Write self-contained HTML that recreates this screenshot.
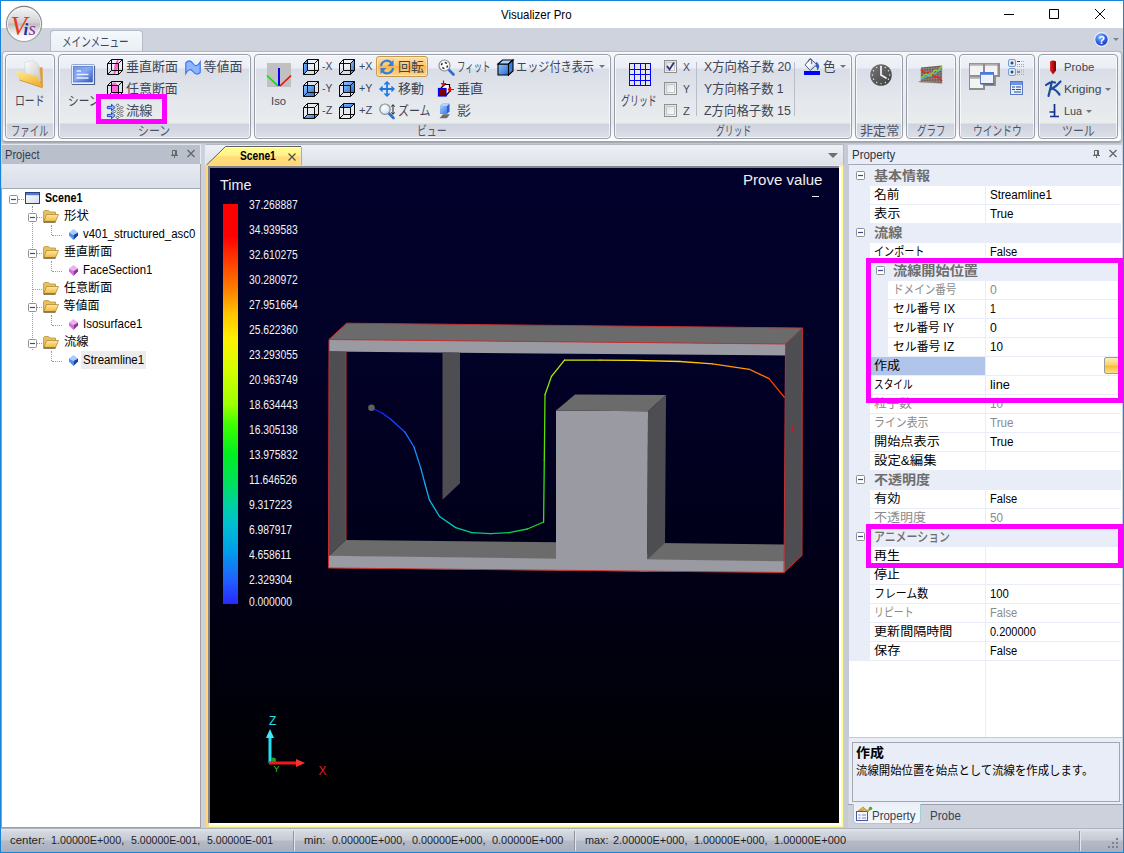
<!DOCTYPE html>
<html lang="ja"><head><meta charset="utf-8"><title>Visualizer Pro</title>
<style>
html,body{margin:0;padding:0}
body{width:1124px;height:853px;overflow:hidden;position:relative;background:#ccd1dc;font-family:"Liberation Sans","Noto Sans CJK JP",sans-serif;font-size:12px;color:#1e1e1e;line-height:1}
div,span,svg{position:absolute;box-sizing:border-box;white-space:nowrap}
svg{overflow:visible}
#frame{left:0;top:0;width:1124px;height:853px;border:1px solid #1883d7;z-index:50;pointer-events:none}
#title{left:1px;top:1px;width:1122px;height:27px;background:#fff}
#tabstrip{left:1px;top:28px;width:1122px;height:24px;background:#ced3de}
#rtab{left:49px;top:1.5px;width:93px;height:23px;background:linear-gradient(#f3f8fb,#e9eef5);border:1px solid #b6bcc8;border-bottom:none;border-radius:4px 4px 0 0}
#ribbon{left:2px;top:51px;width:1120px;height:91px;background:linear-gradient(#f6f8fb,#eceff4 20%,#e8ebf1 80%,#fafbfd 94%,#fff);border:1px solid #b4b9c4;border-bottom-color:#9ca1ad;border-radius:4px;box-shadow:0 1px 2px rgba(90,96,110,.45)}
.grp{top:54px;height:85px;border:1px solid #989da8;border-radius:4px;background:linear-gradient(#f1f3f9 0,#ebeef5 13px,#d9dde7 14px,#e4e7ec 45px,#eaeded 68px,#cfd3de 69px,#dde0e8 84px);box-shadow:inset 0 0 0 1px rgba(255,255,255,.7)}
.tx{transform-origin:0 50%;color:#3d4556}
.c{transform-origin:50% 50%;text-align:center}
.sep{width:1px;background:#b9bec9}
.arr{width:0;height:0;border-left:3px solid transparent;border-right:3px solid transparent;border-top:3px solid #6e7686}
</style></head><body>
<div id="title"></div>
<span class="tx" style="left:500.7px;top:7.6px;font-size:12.4px;height:14.4px;line-height:14.4px;color:#000;transform:scaleX(0.926);">Visualizer Pro</span>
<svg style="left:1000px;top:5px" width="110" height="20" viewBox="0 0 110 20"><path d="M4 9.5h10M49.5 4.5h9v9h-9zM95 4l10 10M105 4l-10 10" stroke="#000" stroke-width="1" fill="none"/></svg>
<div id="tabstrip"><div id="rtab"></div></div>
<span class="tx" style="left:61.8px;top:34.0px;font-size:13px;height:15px;line-height:15px;transform:scaleX(0.736);">メインメニュー</span>
<div id="ribbon"></div>
<div class="grp" style="left:5px;width:50px"></div>
<span class="tx" style="left:11.3px;top:123.0px;font-size:13px;height:15px;line-height:15px;color:#4c5567;transform:scaleX(0.721);">ファイル</span>
<div class="grp" style="left:58px;width:193px"></div>
<span class="tx" style="left:137.5px;top:123.0px;font-size:13px;height:15px;line-height:15px;color:#4c5567;transform:scaleX(0.838);">シーン</span>
<div class="grp" style="left:254px;width:357px"></div>
<span class="tx" style="left:417.4px;top:123.0px;font-size:13px;height:15px;line-height:15px;color:#4c5567;transform:scaleX(0.759);">ビュー</span>
<div class="grp" style="left:614px;width:238px"></div>
<span class="tx" style="left:716.0px;top:123.0px;font-size:13px;height:15px;line-height:15px;color:#4c5567;transform:scaleX(0.679);">グリッド</span>
<div class="grp" style="left:855px;width:48px"></div>
<span class="tx" style="left:859.5px;top:123.0px;font-size:13px;height:15px;line-height:15px;color:#4c5567;transform:scaleX(1.008);">非定常</span>
<div class="grp" style="left:906px;width:50px"></div>
<span class="tx" style="left:916.5px;top:123.0px;font-size:13px;height:15px;line-height:15px;color:#4c5567;transform:scaleX(0.728);">グラフ</span>
<div class="grp" style="left:959px;width:76px"></div>
<span class="tx" style="left:972.5px;top:123.0px;font-size:13px;height:15px;line-height:15px;color:#4c5567;transform:scaleX(0.748);">ウインドウ</span>
<div class="grp" style="left:1038px;width:80px"></div>
<span class="tx" style="left:1061.5px;top:123.0px;font-size:13px;height:15px;line-height:15px;color:#4c5567;transform:scaleX(0.841);">ツール</span>
<svg style="left:4.5px;top:5.2px;" width="38" height="38" viewBox="0 0 38 38"><defs><linearGradient id="lg" x1="0" y1="0" x2="0" y2="1"><stop offset="0" stop-color="#f4f4f4"/><stop offset=".2" stop-color="#e6e6e6"/><stop offset=".47" stop-color="#cfcfcf"/><stop offset=".5" stop-color="#bdbdbd"/><stop offset=".62" stop-color="#d4d4d4"/><stop offset=".85" stop-color="#f6f6f6"/><stop offset="1" stop-color="#ffffff"/></linearGradient><linearGradient id="lgr" x1="0" y1="0" x2="0" y2="1"><stop offset="0" stop-color="#7e7e7e"/><stop offset="1" stop-color="#a8a8a8"/></linearGradient></defs><circle cx="19" cy="19" r="18.200" fill="url(#lgr)"/><circle cx="19" cy="19" r="17" fill="#f8f8f8"/><circle cx="19" cy="19" r="16.200" fill="url(#lg)"/><text x="5.500" y="30" font-family="Liberation Serif,serif" font-style="italic" font-size="27" fill="#ea3a1a">V</text><text x="18.500" y="30" font-family="Liberation Serif,serif" font-style="italic" font-weight="bold" font-size="17" fill="#1a2f9e">i</text><text x="23.500" y="30" font-family="Liberation Serif,serif" font-style="italic" font-size="19" fill="#8f2fa0">s</text></svg>
<svg width="0" height="0" style="left:0;top:0"><defs><linearGradient id="bg1" x1="0" y1="0" x2="1" y2="1"><stop offset="0" stop-color="#8ec4ff"/><stop offset="1" stop-color="#2a6cd0"/></linearGradient></defs></svg>
<svg style="left:14px;top:60px;" width="32" height="30" viewBox="0 0 32 30"><defs><linearGradient id="fo1" x1="0" y1="0" x2=".6" y2="1"><stop offset="0" stop-color="#fdea98"/><stop offset=".5" stop-color="#f9d162"/><stop offset="1" stop-color="#eeb03c"/></linearGradient><linearGradient id="fo2" x1="0" y1="0" x2="1" y2="1"><stop offset="0" stop-color="#ffffff"/><stop offset="1" stop-color="#c4c4c4"/></linearGradient></defs><path d="M22.500 8.500l6-1.500.5 20-2 .8z" fill="#dc9d3a"/><path d="M10.500 2.500l9-2.200 5.500 4.700 1.500 16-14 1.500z" fill="url(#fo2)" stroke="#cdcdcd" stroke-width=".5"/><path d="M19.500 .5l.8 4.500 4.500 0z" fill="#e4e4e4"/><path d="M1.500 10.500L23 16.200 28.500 27.800 5.500 20z" fill="url(#fo1)"/><path d="M5.500 20l23 7.800" stroke="#c88a28" stroke-width=".8"/></svg>
<span class="tx" style="left:15.1px;top:93.0px;font-size:13px;height:15px;line-height:15px;transform:scaleX(0.759);">ロード</span>
<svg style="left:71px;top:64px;" width="24" height="21" viewBox="0 0 24 21"><defs><linearGradient id="sc1" x1="0" y1="0" x2="1" y2="1"><stop offset="0" stop-color="#6d94ee"/><stop offset=".45" stop-color="#88aaf6"/><stop offset="1" stop-color="#2f58c4"/></linearGradient></defs><rect x=".5" y=".5" width="23" height="20" rx="1" fill="#e8eefa" stroke="#97aace"/><rect x="2.500" y="2.500" width="19" height="15.500" fill="url(#sc1)" stroke="#3f62c0" stroke-width=".6"/><path d="M5.500 7h4.500M5.500 10.500h12M5.500 14h12" stroke="#e6efff" stroke-width="1.500"/><path d="M1 20.500h22.500V2" stroke="#4d6290" fill="none" stroke-width="1.200"/></svg>
<span class="tx" style="left:67.5px;top:93.0px;font-size:13px;height:15px;line-height:15px;transform:scaleX(0.821);">シーン</span>
<svg style="left:107px;top:59px;" width="16" height="16" viewBox="0 0 16 16"><path d="M6.5 15l1-9 3-5.5 1 1-.8 8.5-3 5z" fill="#ff5ad2"/><path d="M.5 4.5h11v11H.5zM4.5 .5h11v11H4.5zM.5 4.5l4-4M11.5 4.5l4-4M.5 15.5l4-4M11.5 15.5l4-4" fill="none" stroke="#0a0a0a" stroke-width="1"/></svg>
<span class="tx" style="left:125.9px;top:59.0px;font-size:13px;height:15px;line-height:15px;transform:scaleX(1.0);">垂直断面</span>
<svg style="left:185px;top:59px;" width="16" height="16" viewBox="0 0 16 16"><path d="M.8 14.500V4Q4.500 -.5 8 4.500T15.200 3v10.500Q11.500 17 8 12.500T.8 14.500z" fill="#8eb6ff" stroke="#3e74ee" stroke-width="1.200"/></svg>
<span class="tx" style="left:203.5px;top:59.0px;font-size:13px;height:15px;line-height:15px;transform:scaleX(1.0);">等値面</span>
<svg style="left:107px;top:81px;" width="16" height="16" viewBox="0 0 16 16"><ellipse cx="8" cy="8" rx="3.6" ry="6.5" fill="#ff6ad8" transform="rotate(-12 8 8)"/><path d="M.5 4.5h11v11H.5zM4.5 .5h11v11H4.5zM.5 4.5l4-4M11.5 4.5l4-4M.5 15.5l4-4M11.5 15.5l4-4" fill="none" stroke="#0a0a0a" stroke-width="1"/></svg>
<span class="tx" style="left:126.1px;top:81.0px;font-size:13px;height:15px;line-height:15px;transform:scaleX(0.996);">任意断面</span>
<svg style="left:107px;top:104px;" width="16" height="16" viewBox="0 0 16 16"><path d="M10.6 -0.19999999999999996l1.500 1.500-1.500 1.500-1.500-1.500z" fill="#f0f0f0" stroke="#3c3c3c" stroke-width=".8"/><path d="M14.6 2.0l1.500 1.500-1.500 1.500-1.500-1.500z" fill="#f0f0f0" stroke="#3c3c3c" stroke-width=".8"/><path d="M11.4 3.8l1.500 1.500-1.500 1.500-1.500-1.500z" fill="#f0f0f0" stroke="#3c3c3c" stroke-width=".8"/><path d="M7.4 6.0l1.500 1.500-1.500 1.500-1.500-1.500z" fill="#f0f0f0" stroke="#3c3c3c" stroke-width=".8"/><path d="M14.6 6.0l1.500 1.500-1.500 1.500-1.500-1.500z" fill="#f0f0f0" stroke="#3c3c3c" stroke-width=".8"/><path d="M11.4 7.9l1.500 1.500-1.500 1.500-1.500-1.500z" fill="#f0f0f0" stroke="#3c3c3c" stroke-width=".8"/><path d="M14.6 10.0l1.500 1.500-1.500 1.500-1.500-1.500z" fill="#f0f0f0" stroke="#3c3c3c" stroke-width=".8"/><path d="M10.6 11.9l1.500 1.500-1.500 1.500-1.500-1.500z" fill="#f0f0f0" stroke="#3c3c3c" stroke-width=".8"/><path d="M.4 2.400h4.100V.3L8.200 3.500 4.500 6.700V4.600H.4z" fill="#8fb0ff" stroke="#0a3cb0" stroke-width=".9"/><g transform="translate(0 8)"><path d="M.4 2.400h4.100V.3L8.200 3.500 4.500 6.700V4.600H.4z" fill="#8fb0ff" stroke="#0a3cb0" stroke-width=".9"/></g></svg>
<span class="tx" style="left:125.9px;top:103.0px;font-size:13px;height:15px;line-height:15px;transform:scaleX(1.023);">流線</span>
<div style="left:96px;top:94px;width:71px;height:30px;border:5px solid #ff00ff"></div>
<svg style="left:267px;top:63px;" width="24" height="24" viewBox="0 0 24 24"><rect width="24" height="24" fill="#c0c0c0"/><path d="M12 5v18" stroke="#0000ff" stroke-width="2"/><path d="M0 12.5l11 10.5" stroke="#00e000" stroke-width="1.6"/><path d="M24 12.5l-11 10.5" stroke="#ff0000" stroke-width="1.6"/></svg>
<span class="tx" style="left:271.0px;top:94.8px;font-size:11.5px;height:13.5px;line-height:13.5px;transform:scaleX(0.984);">Iso</span>
<svg style="left:303px;top:58.5px;" width="16" height="16" viewBox="0 0 16 16"><path d="M.5 4.5l4-4v11l-4 4z" fill="url(#bg1)"/><path d="M.5 4.5h11v11H.5zM4.5 .5h11v11H4.5zM.5 4.5l4-4M11.5 4.5l4-4M.5 15.5l4-4M11.5 15.5l4-4" fill="none" stroke="#0a0a0a" stroke-width="1"/></svg>
<span class="tx" style="left:322.2px;top:60.3px;font-size:11.5px;height:13.5px;line-height:13.5px;transform:scaleX(0.896);">-X</span>
<svg style="left:303px;top:80.5px;" width="16" height="16" viewBox="0 0 16 16"><path d="M.5 4.5h11v11H.5z" fill="url(#bg1)"/><path d="M.5 4.5h11v11H.5zM4.5 .5h11v11H4.5zM.5 4.5l4-4M11.5 4.5l4-4M.5 15.5l4-4M11.5 15.5l4-4" fill="none" stroke="#0a0a0a" stroke-width="1"/></svg>
<span class="tx" style="left:322.2px;top:82.3px;font-size:11.5px;height:13.5px;line-height:13.5px;transform:scaleX(0.896);">-Y</span>
<svg style="left:303px;top:102.5px;" width="16" height="16" viewBox="0 0 16 16"><path d="M.5 15.5l4-4h11l-4 4z" fill="url(#bg1)"/><path d="M.5 4.5h11v11H.5zM4.5 .5h11v11H4.5zM.5 4.5l4-4M11.5 4.5l4-4M.5 15.5l4-4M11.5 15.5l4-4" fill="none" stroke="#0a0a0a" stroke-width="1"/></svg>
<span class="tx" style="left:322.2px;top:104.3px;font-size:11.5px;height:13.5px;line-height:13.5px;transform:scaleX(0.949);">-Z</span>
<svg style="left:339px;top:58.5px;" width="16" height="16" viewBox="0 0 16 16"><path d="M11.5 4.5l4-4v11l-4 4z" fill="url(#bg1)"/><path d="M.5 4.5h11v11H.5zM4.5 .5h11v11H4.5zM.5 4.5l4-4M11.5 4.5l4-4M.5 15.5l4-4M11.5 15.5l4-4" fill="none" stroke="#0a0a0a" stroke-width="1"/></svg>
<span class="tx" style="left:358.9px;top:60.3px;font-size:11.5px;height:13.5px;line-height:13.5px;transform:scaleX(0.931);">+X</span>
<svg style="left:339px;top:80.5px;" width="16" height="16" viewBox="0 0 16 16"><path d="M4.5 .5h11v11H4.5z" fill="url(#bg1)"/><path d="M.5 4.5h11v11H.5zM4.5 .5h11v11H4.5zM.5 4.5l4-4M11.5 4.5l4-4M.5 15.5l4-4M11.5 15.5l4-4" fill="none" stroke="#0a0a0a" stroke-width="1"/></svg>
<span class="tx" style="left:358.9px;top:82.3px;font-size:11.5px;height:13.5px;line-height:13.5px;transform:scaleX(0.931);">+Y</span>
<svg style="left:339px;top:102.5px;" width="16" height="16" viewBox="0 0 16 16"><path d="M.5 4.5l4-4h11l-4 4z" fill="url(#bg1)"/><path d="M.5 4.5h11v11H.5zM4.5 .5h11v11H4.5zM.5 4.5l4-4M11.5 4.5l4-4M.5 15.5l4-4M11.5 15.5l4-4" fill="none" stroke="#0a0a0a" stroke-width="1"/></svg>
<span class="tx" style="left:358.9px;top:104.3px;font-size:11.5px;height:13.5px;line-height:13.5px;transform:scaleX(0.975);">+Z</span>
<div style="left:376px;top:56px;width:52px;height:21px;border:1px solid #c7994f;border-radius:3px;background:linear-gradient(#fde0ae,#fbc76f 45%,#fab54a 50%,#fdd991);box-shadow:inset 0 0 0 1px rgba(255,240,200,.6)"></div>
<svg style="left:379px;top:58.5px;" width="16" height="16" viewBox="0 0 16 16"><path d="M2 7a6 6 0 0 1 10.5-3.2" fill="none" stroke="#2f7fe0" stroke-width="2.2"/><path d="M14.5 1v6h-6z" fill="#2f7fe0"/><path d="M14 9a6 6 0 0 1-10.5 3.2" fill="none" stroke="#2f7fe0" stroke-width="2.2"/><path d="M1.5 15V9h6z" fill="#2f7fe0"/></svg>
<span class="tx" style="left:398.3px;top:59.0px;font-size:13px;height:15px;line-height:15px;transform:scaleX(0.992);">回転</span>
<svg style="left:379px;top:81px;" width="16" height="16" viewBox="0 0 16 16"><path d="M8 1v14M1 8h14" stroke="#1f78e0" stroke-width="1.800"/><path d="M5.400 3.600L8 1l2.600 2.600M5.400 12.400L8 15l2.600-2.600M3.600 5.400L1 8l2.600 2.600M12.400 5.400L15 8l-2.600 2.600" stroke="#1f78e0" stroke-width="1.400" fill="none"/></svg>
<span class="tx" style="left:397.5px;top:81.0px;font-size:13px;height:15px;line-height:15px;transform:scaleX(0.996);">移動</span>
<svg style="left:379px;top:102.5px;" width="17" height="17" viewBox="0 0 17 17"><defs><radialGradient id="mg" cx="40%" cy="35%" r="70%"><stop offset="0" stop-color="#fff"/><stop offset="1" stop-color="#cfdcf0"/></radialGradient></defs><path d="M9.5 10l5 5" stroke="#2c6cd0" stroke-width="2.6" stroke-linecap="round"/><circle cx="6" cy="6.2" r="5.2" fill="url(#mg)" stroke="#8a8f98" stroke-width="1.2"/><path d="M14 2v9M12.4 3.6L14 1.6l1.6 2M12.4 9.4l1.6 2 1.6-2" stroke="#222" stroke-width="1" fill="none"/></svg>
<span class="tx" style="left:397.5px;top:103.0px;font-size:13px;height:15px;line-height:15px;transform:scaleX(0.841);">ズーム</span>
<svg style="left:438px;top:58.5px;" width="17" height="17" viewBox="0 0 17 17"><path d="M10.5 10.5l5 5" stroke="#2c6cd0" stroke-width="2.6" stroke-linecap="round"/><circle cx="6.5" cy="6.5" r="5.5" fill="#f4f6fa" stroke="#8a8f98" stroke-width="1.2"/><circle cx="6.5" cy="6.5" r="3" fill="#fff" stroke="#222" stroke-width="1.4" stroke-dasharray="2.2 2.5"/></svg>
<span class="tx" style="left:456.9px;top:59.0px;font-size:13px;height:15px;line-height:15px;transform:scaleX(0.646);">フィット</span>
<svg style="left:438px;top:80px;" width="17" height="17" viewBox="0 0 17 17"><path d="M3 8l3.500-3.500h5l0 7-3.500 4" fill="#fff" stroke="#000" stroke-width="1.200"/><rect x=".5" y="8.500" width="7.500" height="7.500" fill="#800000" stroke="#0000f0" stroke-width="1.200"/><path d="M5.500 .5v5.500M3 3.500h5M3.800 4.300L5.500 6l1.700-1.700" stroke="#ff0000" stroke-width="1.200" fill="none"/><path d="M10.500 9.500H16M12.300 7.500l-2 2 2 2M12.500 7v5" stroke="#ff0000" stroke-width="1.200" fill="none"/></svg>
<span class="tx" style="left:456.9px;top:81.0px;font-size:13px;height:15px;line-height:15px;transform:scaleX(1.004);">垂直</span>
<svg style="left:438px;top:102px;" width="16" height="17" viewBox="0 0 16 17"><defs><linearGradient id="sh1" x1="0" y1="0" x2="1" y2="1"><stop offset="0" stop-color="#a4c8ff"/><stop offset="1" stop-color="#3c7cec"/></linearGradient></defs><path d="M1.500 16.300l3.500-4h7l-3.200 4z" fill="#6c6c6c"/><path d="M2 4l2.500-2.200h7v8l-2.500 2H2z" fill="#2a5ed0"/><path d="M2 4h7v7.800H2z" fill="url(#sh1)"/><path d="M2 4l2.500-2.200h7L9 4z" fill="#b4d4ff"/></svg>
<span class="tx" style="left:456.9px;top:103.0px;font-size:13px;height:15px;line-height:15px;transform:scaleX(1.069);">影</span>
<svg style="left:497px;top:58.5px;" width="17" height="17" viewBox="0 0 17 17"><path d="M1 5h10.5v11H1z" fill="url(#bg1)" stroke="#000" stroke-width="1.1"/><path d="M1 5l4.500-4H16l-4.500 4z" fill="#a9d1ff" stroke="#000" stroke-width="1.1"/><path d="M11.500 5L16 1v11l-4.500 4z" fill="#3a7de0" stroke="#000" stroke-width="1.1"/></svg>
<span class="tx" style="left:515.5px;top:59.0px;font-size:13px;height:15px;line-height:15px;transform:scaleX(0.857);">エッジ付き表示</span>
<div class="arr" style="left:599px;top:65px"></div>
<svg style="left:629px;top:63px;" width="22" height="23" viewBox="0 0 22 23"><g shape-rendering="crispEdges"><rect x="0" y="0" width="22" height="23" fill="#e6e6e6"/><rect x="0" y="0" width="1" height="23" fill="#0000ff"/><rect x="5" y="0" width="1" height="23" fill="#0000ff"/><rect x="11" y="0" width="1" height="23" fill="#0000ff"/><rect x="16" y="0" width="1" height="23" fill="#0000ff"/><rect x="21" y="0" width="1" height="23" fill="#0000ff"/><rect x="0" y="0" width="22" height="1" fill="#0000ff"/><rect x="0" y="6" width="22" height="1" fill="#0000ff"/><rect x="0" y="11" width="22" height="1" fill="#0000ff"/><rect x="0" y="17" width="22" height="1" fill="#0000ff"/><rect x="0" y="22" width="22" height="1" fill="#0000ff"/></g></svg>
<span class="tx" style="left:621.1px;top:92.5px;font-size:13px;height:15px;line-height:15px;transform:scaleX(0.688);">グリッド</span>
<div style="left:664px;top:60px;width:13px;height:13px;border:1px solid #8e8f8f;background:linear-gradient(135deg,#dcdcd8,#f6f6f4)"><div style="left:1px;top:1px;width:9px;height:9px;border:1px solid #c5c8cc;background:linear-gradient(135deg,#e3e3e0,#fbfbfb)"></div></div>
<svg style="left:666px;top:62px;" width="9" height="9" viewBox="0 0 9 9"><path d="M1 4l2.500 3.500L8 .5" stroke="#31347c" stroke-width="1.8" fill="none"/></svg>
<span class="tx" style="left:682.5px;top:61.0px;font-size:11.5px;height:13.5px;line-height:13.5px;transform:scaleX(0.9);">X</span>
<div style="left:664px;top:82px;width:13px;height:13px;border:1px solid #8e8f8f;background:linear-gradient(135deg,#dcdcd8,#f6f6f4)"><div style="left:1px;top:1px;width:9px;height:9px;border:1px solid #c5c8cc;background:linear-gradient(135deg,#e3e3e0,#fbfbfb)"></div></div>
<span class="tx" style="left:682.5px;top:83.0px;font-size:11.5px;height:13.5px;line-height:13.5px;transform:scaleX(0.9);">Y</span>
<div style="left:664px;top:104px;width:13px;height:13px;border:1px solid #8e8f8f;background:linear-gradient(135deg,#dcdcd8,#f6f6f4)"><div style="left:1px;top:1px;width:9px;height:9px;border:1px solid #c5c8cc;background:linear-gradient(135deg,#e3e3e0,#fbfbfb)"></div></div>
<span class="tx" style="left:682.5px;top:105.0px;font-size:11.5px;height:13.5px;line-height:13.5px;transform:scaleX(0.982);">Z</span>
<div class="sep" style="left:696px;top:62px;height:54px"></div>
<span class="tx" style="left:703.5px;top:59.0px;font-size:13px;height:15px;line-height:15px;transform:scaleX(0.95);">X方向格子数 20</span>
<span class="tx" style="left:703.5px;top:81.0px;font-size:13px;height:15px;line-height:15px;transform:scaleX(0.942);">Y方向格子数 1</span>
<span class="tx" style="left:703.5px;top:103.0px;font-size:13px;height:15px;line-height:15px;transform:scaleX(0.954);">Z方向格子数 15</span>
<div class="sep" style="left:794px;top:62px;height:54px"></div>
<svg style="left:804px;top:58px;" width="17" height="17" viewBox="0 0 17 17"><defs><linearGradient id="bk" x1="0" y1="0" x2="1" y2="1"><stop offset="0" stop-color="#fff"/><stop offset=".5" stop-color="#f4f7fc"/><stop offset="1" stop-color="#7fa4e4"/></linearGradient></defs><path d="M12.300 3.800q3.200 2.200 2.800 5.800-.6 2-2 3 .6-3-1.800-4.600z" fill="#2c62d2"/><path d="M6.100 .6L13 6.600 6.300 12.500 1.100 6.900z" fill="url(#bk)" stroke="#3a4a6a" stroke-width=".9"/><path d="M4.200 3.600q.8-3.600 3.600-2.200" stroke="#3a4a6a" stroke-width=".9" fill="none"/><path d="M7.600 1.500v4.600" stroke="#6e7888" stroke-width="1.300"/><rect x="0" y="13" width="16" height="4" fill="#0000ff"/></svg>
<span class="tx" style="left:822.5px;top:59.0px;font-size:13px;height:15px;line-height:15px;transform:scaleX(0.954);">色</span>
<div class="arr" style="left:839.500px;top:65px"></div>
<svg style="left:869.5px;top:63.5px;" width="22" height="22" viewBox="0 0 22 22"><defs><linearGradient id="ck" x1="0" y1="0" x2="1" y2="1"><stop offset="0" stop-color="#7a7a7a"/><stop offset="1" stop-color="#3d3d3d"/></linearGradient></defs><circle cx="11" cy="11" r="10.8" fill="url(#ck)"/><circle cx="11.00" cy="2.40" r=".7" fill="#e8e8e8"/><circle cx="15.30" cy="3.55" r=".7" fill="#e8e8e8"/><circle cx="18.45" cy="6.70" r=".7" fill="#e8e8e8"/><circle cx="19.60" cy="11.00" r=".7" fill="#e8e8e8"/><circle cx="18.45" cy="15.30" r=".7" fill="#e8e8e8"/><circle cx="15.30" cy="18.45" r=".7" fill="#e8e8e8"/><circle cx="11.00" cy="19.60" r=".7" fill="#e8e8e8"/><circle cx="6.70" cy="18.45" r=".7" fill="#e8e8e8"/><circle cx="3.55" cy="15.30" r=".7" fill="#e8e8e8"/><circle cx="2.40" cy="11.00" r=".7" fill="#e8e8e8"/><circle cx="3.55" cy="6.70" r=".7" fill="#e8e8e8"/><circle cx="6.70" cy="3.55" r=".7" fill="#e8e8e8"/><path d="M11 2.500V11l5 3" stroke="#f4f4f4" stroke-width="1.7" fill="none" stroke-linecap="round"/></svg>
<svg style="left:918px;top:65px;" width="26" height="20" viewBox="0 0 26 20"><path d="M0 17l3-1.500h21l0 3z" fill="#8a7c76"/><path d="M3 2.500L24 .5v17.500L3 16z" fill="#6a5c58"/><path d="M3.0 3.0v15.0" stroke="#a09088" stroke-width=".6"/><path d="M5.6 2.8v15.3" stroke="#a09088" stroke-width=".6"/><path d="M8.2 2.6v15.6" stroke="#a09088" stroke-width=".6"/><path d="M10.8 2.4v15.9" stroke="#a09088" stroke-width=".6"/><path d="M13.4 2.2v16.2" stroke="#a09088" stroke-width=".6"/><path d="M16.0 2.0v16.5" stroke="#a09088" stroke-width=".6"/><path d="M18.6 1.7999999999999998v16.8" stroke="#a09088" stroke-width=".6"/><path d="M21.2 1.5999999999999999v17.1" stroke="#a09088" stroke-width=".6"/><path d="M23.8 1.4v17.4" stroke="#a09088" stroke-width=".6"/><path d="M3 4.0l21-1.50" stroke="#a09088" stroke-width=".6"/><path d="M3 6.6l21-1.40" stroke="#a09088" stroke-width=".6"/><path d="M3 9.2l21-1.30" stroke="#a09088" stroke-width=".6"/><path d="M3 11.8l21-1.20" stroke="#a09088" stroke-width=".6"/><path d="M3 14.4l21-1.10" stroke="#a09088" stroke-width=".6"/><path d="M3 17.0l21-1.00" stroke="#a09088" stroke-width=".6"/><path d="M3 5l5 4 4-2 5 5 3 0 4 4" stroke="#e82020" stroke-width="1.400" fill="none"/><path d="M3 13l5-4 4 2 5-6 3 1 4-5" stroke="#9fd020" stroke-width="1.400" fill="none"/><path d="M3 14l5-2 4-4 5 1 3-4 4 0" stroke="#40c0e0" stroke-width="1.200" fill="none"/></svg>
<svg style="left:969px;top:63px;" width="32" height="27" viewBox="0 0 32 27"><rect x="0" y="0" width="31" height="14" fill="#8e8e8e"/><rect x="0" y="13" width="16" height="14" fill="#8e8e8e"/><rect x="14" y="13" width="13" height="10" fill="#8e8e8e"/><rect x="1" y="2.500" width="13" height="9.500" fill="#f3f3f3"/><rect x="16" y="2.500" width="12.500" height="9.500" fill="#f3f3f3"/><rect x="1" y="15.500" width="13" height="9.500" fill="#f3f3f3"/><path d="M1 1.300h13M16 1.300h12.500M1 14.300h13" stroke="#b8b8b8" stroke-width="1"/><rect x="11.500" y="9.500" width="13" height="11" fill="#eef2fc" stroke="#5f7fc0"/><rect x="11.500" y="9.200" width="13" height="2.600" fill="#4a7ae4"/><path d="M11.500 21h13.500" stroke="#3f5a8c" stroke-width="1"/></svg>
<svg style="left:1008px;top:59px;" width="17" height="17" viewBox="0 0 17 17"><rect x=".5" y=".5" width="7" height="7" rx="1.500" fill="#dfe9f8" stroke="#6f9fd8"/><rect x=".5" y="9.500" width="7" height="7" rx="1.500" fill="#dfe9f8" stroke="#6f9fd8"/><path d="M2.500 4h3M4 2.500v3M2.500 13h3M4 11.500v3" stroke="#222" stroke-width="1.200"/><path d="M9 2.500h3M9 13h3" stroke="#444" stroke-width="1"/><path d="M9 5.500h7M9 7.500h7M13 2.500h3M9 11h7M13 13h3M9 15.500h7" stroke="#9aa4c8" stroke-width="1" stroke-dasharray="1 1"/></svg>
<svg style="left:1010px;top:81px;" width="13" height="14" viewBox="0 0 13 14"><rect x=".5" y=".5" width="12" height="13" fill="#e8eefc" stroke="#5a78c0"/><rect x="1" y="1" width="11" height="3" fill="#6a96e8"/><path d="M2 6h3M6 6h5M2 8.500h3M6 8.500h5M4 11h7" stroke="#2c4a9c" stroke-width="1.200"/></svg>
<svg style="left:1047px;top:59px;" width="12" height="17" viewBox="0 0 12 17"><defs><linearGradient id="pr" x1="0" y1="0" x2="1" y2="0"><stop offset="0" stop-color="#e03030"/><stop offset=".5" stop-color="#b80c0c"/><stop offset="1" stop-color="#7c0000"/></linearGradient></defs><path d="M3 2.500q3-2 6 0v9l-3 4-3-4z" fill="url(#pr)"/></svg>
<span class="tx" style="left:1064.0px;top:60.5px;font-size:11.5px;height:13.5px;line-height:13.5px;transform:scaleX(0.987);">Probe</span>
<svg style="left:1045px;top:80px;" width="18" height="17" viewBox="0 0 18 17"><path d="M1 5q5-4 9-2.500M7 1.500L3.500 16M15.500 1.500Q11 7 5.500 9.500M7 8.500q4 1 7.500 6" stroke="#1c4c9c" stroke-width="2.200" fill="none" stroke-linecap="round"/></svg>
<span class="tx" style="left:1064.0px;top:82.5px;font-size:11.5px;height:13.5px;line-height:13.5px;transform:scaleX(1.048);">Kriging</span>
<div class="arr" style="left:1105px;top:88px"></div>
<svg style="left:1048px;top:104px;" width="12" height="14" viewBox="0 0 12 14"><path d="M6.500 0v12M1.500 8h6M2 12.500h9" stroke="#14308c" stroke-width="1.700" fill="none"/></svg>
<span class="tx" style="left:1064.0px;top:104.5px;font-size:11.5px;height:13.5px;line-height:13.5px;transform:scaleX(0.943);">Lua</span>
<div class="arr" style="left:1086px;top:110px"></div>
<svg style="left:1094.3px;top:31.6px;" width="15" height="15" viewBox="0 0 15 15"><defs><radialGradient id="hp" cx="40%" cy="30%" r="75%"><stop offset="0" stop-color="#8cb8ff"/><stop offset=".6" stop-color="#2a5fe0"/><stop offset="1" stop-color="#1638b0"/></radialGradient></defs><circle cx="7.500" cy="7.500" r="6.800" fill="url(#hp)" stroke="#e8eefc" stroke-width="1.200"/><text x="7.500" y="11.500" text-anchor="middle" font-family="Liberation Sans,sans-serif" font-weight="bold" font-size="11" fill="#fff">?</text></svg>
<div class="arr" style="left:1113px;top:38px;border-top-color:#7d8490"></div>
<div style="left:2px;top:145px;width:198px;height:19px;background:#b9c0cc"></div>
<span class="tx" style="left:5.2px;top:147.5px;font-size:12px;height:14px;line-height:14px;color:#333b4c;transform:scaleX(0.926);">Project</span>
<svg style="left:171px;top:150px;" width="7" height="8" viewBox="0 0 7 8"><path d="M1.500 .5h4v4.500h-4zM4.500 .5v5M0 5.500h7M3.500 6v2" stroke="#666" stroke-width="1" fill="none"/><path d="M4 .5h1.500v5H4z" fill="#666"/></svg>
<svg style="left:187px;top:150px;" width="8" height="7" viewBox="0 0 8 7"><path d="M.5 0l7 7M7.500 0l-7 7" stroke="#666" stroke-width="1.300"/></svg>
<div style="left:2px;top:164px;width:198px;height:24px;background:linear-gradient(#e6eaf2,#d9dee8)"></div>
<div style="left:1px;top:188px;width:200px;height:640px;background:#fff;border:1px solid #a0a0a4;border-top-color:#a3a9b5"></div>
<div style="left:200px;top:164px;width:1px;height:662px;background:#a2a2a6"></div>
<div style="left:200px;top:144px;width:1px;height:20px;background:#e6e9f0"></div>
<div style="left:2px;top:144px;width:198px;height:1px;background:#e2e6ee"></div>
<svg style="left:9px;top:194.5px;" width="9" height="9" viewBox="0 0 9 9"><rect x=".5" y=".5" width="8" height="8" rx="1" fill="#fff" stroke="#919191"/><path d="M2 4.500h5" stroke="#3c4a9c" stroke-width="1.200"/></svg>
<div style="left:18px;top:199px;width:6px;height:0;border-top:1px dotted #9a9a9a"></div>
<svg style="left:25px;top:192px;" width="15" height="12" viewBox="0 0 15 12"><defs><linearGradient id="wn" x1="0" y1="0" x2="1" y2="1"><stop offset="0" stop-color="#fff"/><stop offset="1" stop-color="#d4dcf0"/></linearGradient></defs><rect x=".5" y=".5" width="14" height="11" fill="url(#wn)" stroke="#2d3f7c"/><rect x="1" y="1" width="13" height="2.200" fill="#4a7ae0"/></svg>
<span class="tx" style="left:44.7px;top:191.0px;font-size:12px;height:14px;line-height:14px;color:#000;font-weight:bold;transform:scaleX(0.89);">Scene1</span>
<div style="left:32px;top:206px;width:0;height:144px;border-left:1px dotted #9a9a9a"></div>
<svg style="left:28px;top:212.5px;" width="9" height="9" viewBox="0 0 9 9"><rect x=".5" y=".5" width="8" height="8" rx="1" fill="#fff" stroke="#919191"/><path d="M2 4.500h5" stroke="#3c4a9c" stroke-width="1.200"/></svg>
<div style="left:37px;top:217px;width:5px;height:0;border-top:1px dotted #9a9a9a"></div>
<svg style="left:43px;top:210px;" width="16" height="13" viewBox="0 0 16 13"><defs><linearGradient id="fd" x1="0" y1="0" x2="0" y2="1"><stop offset="0" stop-color="#ffe9a0"/><stop offset="1" stop-color="#f0b840"/></linearGradient></defs><path d="M.5 11.500V1.500l1-1h4l1.500 1.500h5.500v9.500z" fill="#e9c15c" stroke="#b8923c" stroke-width=".8"/><path d="M.8 11.500l2.700-7h12l-3 7z" fill="url(#fd)" stroke="#b08a30" stroke-width=".8"/><path d="M.5 12.200h12" stroke="#5a4a20" stroke-width="1"/></svg>
<span class="tx" style="left:63.5px;top:209.0px;font-size:12px;height:14px;line-height:14px;color:#000;transform:scaleX(1.033);">形状</span>
<div style="left:51px;top:225px;width:0;height:10px;border-left:1px dotted #9a9a9a"></div>
<div style="left:52px;top:235px;width:10px;height:0;border-top:1px dotted #9a9a9a"></div>
<svg style="left:69px;top:228.5px;" width="9" height="11" viewBox="0 0 9 11"><path d="M4.500 0L9 3.500 4.500 6 0 3.500z" fill="#a8ccff"/><path d="M0 3.500L4.500 6v5L0 6.500z" fill="#4d8ef0"/><path d="M9 3.500L4.500 6v5L9 6.500z" fill="#1d3f9c"/></svg>
<span class="tx" style="left:82.6px;top:227.0px;font-size:12px;height:14px;line-height:14px;color:#000;transform:scaleX(0.951);">v401_structured_asc0</span>
<svg style="left:28px;top:248.5px;" width="9" height="9" viewBox="0 0 9 9"><rect x=".5" y=".5" width="8" height="8" rx="1" fill="#fff" stroke="#919191"/><path d="M2 4.500h5" stroke="#3c4a9c" stroke-width="1.200"/></svg>
<div style="left:37px;top:253px;width:5px;height:0;border-top:1px dotted #9a9a9a"></div>
<svg style="left:43px;top:246px;" width="16" height="13" viewBox="0 0 16 13"><defs><linearGradient id="fd" x1="0" y1="0" x2="0" y2="1"><stop offset="0" stop-color="#ffe9a0"/><stop offset="1" stop-color="#f0b840"/></linearGradient></defs><path d="M.5 11.500V1.500l1-1h4l1.500 1.500h5.500v9.500z" fill="#e9c15c" stroke="#b8923c" stroke-width=".8"/><path d="M.8 11.500l2.700-7h12l-3 7z" fill="url(#fd)" stroke="#b08a30" stroke-width=".8"/><path d="M.5 12.200h12" stroke="#5a4a20" stroke-width="1"/></svg>
<span class="tx" style="left:63.5px;top:245.0px;font-size:12px;height:14px;line-height:14px;color:#000;transform:scaleX(1.004);">垂直断面</span>
<div style="left:51px;top:261px;width:0;height:10px;border-left:1px dotted #9a9a9a"></div>
<div style="left:52px;top:271px;width:10px;height:0;border-top:1px dotted #9a9a9a"></div>
<svg style="left:69px;top:264.5px;" width="9" height="11" viewBox="0 0 9 11"><path d="M4.500 0L9 3.500 4.500 6 0 3.500z" fill="#f0b0f0"/><path d="M0 3.500L4.500 6v5L0 6.500z" fill="#d070d8"/><path d="M9 3.500L4.500 6v5L9 6.500z" fill="#8c3a98"/></svg>
<span class="tx" style="left:82.6px;top:263.0px;font-size:12px;height:14px;line-height:14px;color:#000;transform:scaleX(0.946);">FaceSection1</span>
<div style="left:33px;top:289px;width:9px;height:0;border-top:1px dotted #9a9a9a"></div>
<svg style="left:43px;top:282px;" width="16" height="13" viewBox="0 0 16 13"><defs><linearGradient id="fd" x1="0" y1="0" x2="0" y2="1"><stop offset="0" stop-color="#ffe9a0"/><stop offset="1" stop-color="#f0b840"/></linearGradient></defs><path d="M.5 11.500V1.500l1-1h4l1.500 1.500h5.500v9.500z" fill="#e9c15c" stroke="#b8923c" stroke-width=".8"/><path d="M.8 11.500l2.700-7h12l-3 7z" fill="url(#fd)" stroke="#b08a30" stroke-width=".8"/><path d="M.5 12.200h12" stroke="#5a4a20" stroke-width="1"/></svg>
<span class="tx" style="left:63.5px;top:281.0px;font-size:12px;height:14px;line-height:14px;color:#000;transform:scaleX(1.004);">任意断面</span>
<svg style="left:28px;top:302.5px;" width="9" height="9" viewBox="0 0 9 9"><rect x=".5" y=".5" width="8" height="8" rx="1" fill="#fff" stroke="#919191"/><path d="M2 4.500h5" stroke="#3c4a9c" stroke-width="1.200"/></svg>
<div style="left:37px;top:307px;width:5px;height:0;border-top:1px dotted #9a9a9a"></div>
<svg style="left:43px;top:300px;" width="16" height="13" viewBox="0 0 16 13"><defs><linearGradient id="fd" x1="0" y1="0" x2="0" y2="1"><stop offset="0" stop-color="#ffe9a0"/><stop offset="1" stop-color="#f0b840"/></linearGradient></defs><path d="M.5 11.500V1.500l1-1h4l1.500 1.500h5.500v9.500z" fill="#e9c15c" stroke="#b8923c" stroke-width=".8"/><path d="M.8 11.500l2.700-7h12l-3 7z" fill="url(#fd)" stroke="#b08a30" stroke-width=".8"/><path d="M.5 12.200h12" stroke="#5a4a20" stroke-width="1"/></svg>
<span class="tx" style="left:63.5px;top:299.0px;font-size:12px;height:14px;line-height:14px;color:#000;transform:scaleX(1.0);">等値面</span>
<div style="left:51px;top:315px;width:0;height:10px;border-left:1px dotted #9a9a9a"></div>
<div style="left:52px;top:325px;width:10px;height:0;border-top:1px dotted #9a9a9a"></div>
<svg style="left:69px;top:318.5px;" width="9" height="11" viewBox="0 0 9 11"><path d="M4.500 0L9 3.500 4.500 6 0 3.500z" fill="#f0b0f0"/><path d="M0 3.500L4.500 6v5L0 6.500z" fill="#d070d8"/><path d="M9 3.500L4.500 6v5L9 6.500z" fill="#8c3a98"/></svg>
<span class="tx" style="left:82.6px;top:317.0px;font-size:12px;height:14px;line-height:14px;color:#000;transform:scaleX(0.958);">Isosurface1</span>
<svg style="left:28px;top:338.5px;" width="9" height="9" viewBox="0 0 9 9"><rect x=".5" y=".5" width="8" height="8" rx="1" fill="#fff" stroke="#919191"/><path d="M2 4.500h5" stroke="#3c4a9c" stroke-width="1.200"/></svg>
<div style="left:37px;top:343px;width:5px;height:0;border-top:1px dotted #9a9a9a"></div>
<svg style="left:43px;top:336px;" width="16" height="13" viewBox="0 0 16 13"><defs><linearGradient id="fd" x1="0" y1="0" x2="0" y2="1"><stop offset="0" stop-color="#ffe9a0"/><stop offset="1" stop-color="#f0b840"/></linearGradient></defs><path d="M.5 11.500V1.500l1-1h4l1.500 1.500h5.500v9.500z" fill="#e9c15c" stroke="#b8923c" stroke-width=".8"/><path d="M.8 11.500l2.700-7h12l-3 7z" fill="url(#fd)" stroke="#b08a30" stroke-width=".8"/><path d="M.5 12.200h12" stroke="#5a4a20" stroke-width="1"/></svg>
<span class="tx" style="left:63.5px;top:335.0px;font-size:12px;height:14px;line-height:14px;color:#000;transform:scaleX(1.029);">流線</span>
<div style="left:51px;top:351px;width:0;height:10px;border-left:1px dotted #9a9a9a"></div>
<div style="left:52px;top:361px;width:10px;height:0;border-top:1px dotted #9a9a9a"></div>
<div style="left:81px;top:351px;width:65px;height:18px;background:#ececec"></div>
<svg style="left:69px;top:354.5px;" width="9" height="11" viewBox="0 0 9 11"><path d="M4.500 0L9 3.500 4.500 6 0 3.500z" fill="#a8ccff"/><path d="M0 3.500L4.500 6v5L0 6.500z" fill="#4d8ef0"/><path d="M9 3.500L4.500 6v5L9 6.500z" fill="#1d3f9c"/></svg>
<span class="tx" style="left:82.6px;top:353.0px;font-size:12px;height:14px;line-height:14px;color:#000;transform:scaleX(0.954);">Streamline1</span>
<div style="left:205px;top:144px;width:639px;height:21px;background:linear-gradient(#eef0f5,#dde1e9);border-left:1px solid #e9ecf2;border-top:1px solid #b2b7c2;border-right:1px solid #b4b9c4"></div>
<svg style="left:205px;top:145px;" width="100" height="21" viewBox="0 0 100 21"><defs><linearGradient id="tb" x1="0" y1="0" x2="0" y2="1"><stop offset="0" stop-color="#ffff90"/><stop offset=".45" stop-color="#fff28a"/><stop offset=".55" stop-color="#ffdc7a"/><stop offset="1" stop-color="#ffd878"/></linearGradient></defs><path d="M1 20.500L20.500 1.500H95.500V20.500z" fill="url(#tb)"/><path d="M1.500 20L20.500 1.500H96" stroke="#5f5f5f" stroke-width="1" fill="none"/><path d="M20.500 2.500H96" stroke="#fff" stroke-width="1" opacity=".8"/><path d="M96.500 2v18" stroke="#c9a95a" stroke-width="1"/></svg>
<span class="tx" style="left:239.7px;top:148.5px;font-size:12px;height:14px;line-height:14px;color:#000;font-weight:bold;transform:scaleX(0.852);">Scene1</span>
<svg style="left:288px;top:152.5px;" width="8" height="8" viewBox="0 0 8 8"><path d="M.5 .5l7 7M7.500 .5l-7 7" stroke="#4f4f4f" stroke-width="1.200"/></svg>
<div class="arr" style="left:828px;top:153px;border-left-width:5px;border-right-width:5px;border-top-width:5px;border-top-color:#6e6e6e"></div>
<div style="left:206px;top:165px;width:637px;height:662px;background:#ffd878"></div>
<div style="left:208px;top:166px;width:635px;height:661px;background:#ffff96"></div>
<div style="left:208px;top:166px;width:633px;height:659px;background:#fff"></div>
<div style="left:206px;top:165px;width:3px;height:662px;background:#ffd878"></div>
<div style="left:206px;top:164.600px;width:637px;height:2px;background:linear-gradient(90deg,#ffd878,#ffe888 60%,#fff29a)"></div>
<div style="left:208.400px;top:166.200px;width:631px;height:657px;background:#848488"></div>
<div id="vp" style="left:210px;top:168px;width:629px;height:655px;background:linear-gradient(#02012c 0%,#020127 28%,#01001b 55%,#01000e 75%,#000003 93%,#000 100%)"></div>
<span class="tx" style="left:219.8px;top:175.8px;font-size:15.5px;height:17.5px;line-height:17.5px;color:#f0f0f0;transform:scaleX(0.926);">Time</span>
<span class="tx" style="left:743.1px;top:171.1px;font-size:15.5px;height:17.5px;line-height:17.5px;color:#f0f0f0;transform:scaleX(0.971);">Prove value</span>
<div style="left:812px;top:196px;width:7px;height:1px;background:#eee"></div>
<div style="left:223px;top:204px;width:15px;height:400px;background:linear-gradient(#ff0000 0,#ff0000 8%,#ff3000 13%,#ff8000 21.500%,#ffc000 27%,#fff000 33.500%,#d4ff00 41.500%,#a0ff00 50%,#40ff00 55%,#00f020 62.500%,#00e060 70%,#00d0a0 75%,#00c0d0 80%,#00a0e8 86.500%,#2060ff 94%,#2828ff 100%)"></div>
<span class="tx" style="left:248.5px;top:197.5px;font-size:12px;height:14px;line-height:14px;color:#f2f2f2;transform:scaleX(0.86);">37.268887</span>
<span class="tx" style="left:248.5px;top:222.5px;font-size:12px;height:14px;line-height:14px;color:#f2f2f2;transform:scaleX(0.86);">34.939583</span>
<span class="tx" style="left:248.5px;top:247.5px;font-size:12px;height:14px;line-height:14px;color:#f2f2f2;transform:scaleX(0.86);">32.610275</span>
<span class="tx" style="left:248.5px;top:272.5px;font-size:12px;height:14px;line-height:14px;color:#f2f2f2;transform:scaleX(0.86);">30.280972</span>
<span class="tx" style="left:248.5px;top:297.5px;font-size:12px;height:14px;line-height:14px;color:#f2f2f2;transform:scaleX(0.86);">27.951664</span>
<span class="tx" style="left:248.5px;top:322.5px;font-size:12px;height:14px;line-height:14px;color:#f2f2f2;transform:scaleX(0.86);">25.622360</span>
<span class="tx" style="left:248.5px;top:347.5px;font-size:12px;height:14px;line-height:14px;color:#f2f2f2;transform:scaleX(0.86);">23.293055</span>
<span class="tx" style="left:248.5px;top:372.5px;font-size:12px;height:14px;line-height:14px;color:#f2f2f2;transform:scaleX(0.86);">20.963749</span>
<span class="tx" style="left:248.5px;top:397.5px;font-size:12px;height:14px;line-height:14px;color:#f2f2f2;transform:scaleX(0.86);">18.634443</span>
<span class="tx" style="left:248.5px;top:422.5px;font-size:12px;height:14px;line-height:14px;color:#f2f2f2;transform:scaleX(0.86);">16.305138</span>
<span class="tx" style="left:248.5px;top:447.5px;font-size:12px;height:14px;line-height:14px;color:#f2f2f2;transform:scaleX(0.86);">13.975832</span>
<span class="tx" style="left:248.5px;top:472.5px;font-size:12px;height:14px;line-height:14px;color:#f2f2f2;transform:scaleX(0.86);">11.646526</span>
<span class="tx" style="left:248.5px;top:497.5px;font-size:12px;height:14px;line-height:14px;color:#f2f2f2;transform:scaleX(0.86);">9.317223</span>
<span class="tx" style="left:248.5px;top:522.5px;font-size:12px;height:14px;line-height:14px;color:#f2f2f2;transform:scaleX(0.86);">6.987917</span>
<span class="tx" style="left:248.5px;top:547.5px;font-size:12px;height:14px;line-height:14px;color:#f2f2f2;transform:scaleX(0.86);">4.658611</span>
<span class="tx" style="left:248.5px;top:572.5px;font-size:12px;height:14px;line-height:14px;color:#f2f2f2;transform:scaleX(0.86);">2.329304</span>
<span class="tx" style="left:248.5px;top:594.5px;font-size:12px;height:14px;line-height:14px;color:#f2f2f2;transform:scaleX(0.86);">0.000000</span>
<svg style="left:210px;top:168px" width="629" height="655" viewBox="210 168 629 655"><path d="M329 339.5 L346.6 323.2 L802.4 328 L785.5 344z" fill="#6b6b6b"/><path d="M785.5 344 L802.4 328 L802 555.5 L784 572.5z" fill="#4e4e52"/><path d="M329 339.5 L785.5 344 L785.5 355.5 L329 351.6z" fill="#9a9aa3"/><path d="M329 351.6 L346 351.7 L346 540 L328.5 556z" fill="#4e4e52"/><path d="M346 540 L560 542.3 L560 559.5 L328.5 556.3z" fill="#6b6b6b"/><path d="M328.5 555.7 L560 558.7 L560 570.5 L328.5 568z" fill="#9a9aa3"/><path d="M442.5 352.5 L460 352.7 L460 483.3 L442.5 499.7z" fill="#4e4e52"/><path d="M660 543 L784.5 544.5 L784.5 562 L640 560z" fill="#6b6b6b"/><path d="M640 559.3 L784.5 561.2 L784.5 572.5 L640 571.4z" fill="#9a9aa3"/><path d="M556 410.6 L648 411.3 L647.3 571.5 L556 570.5z" fill="#9a9aa3"/><path d="M556 410.6 L575 394.4 L666 395 L648 411.3z" fill="#6b6b6b"/><path d="M648 411.3 L666 395 L665 543 L647.3 559.6z" fill="#4e4e52"/><path d="M329 339.500L346.600 323.200 802.400 328 802 555.500 784 572.500 328.500 568zM329 339.500L785.500 344 802.400 328M785.500 344L784 572.500M346 352V540" fill="none" stroke="#c63030" stroke-width="1"/><path d="M371.5 407.8L382 413" stroke="#1020f0" stroke-width="1.300" stroke-linecap="round"/><path d="M382 413L391 419.4" stroke="#1030ff" stroke-width="1.300" stroke-linecap="round"/><path d="M391 419.4L404.8 431.9" stroke="#1848ff" stroke-width="1.300" stroke-linecap="round"/><path d="M404.8 431.9L414 447" stroke="#1c70ff" stroke-width="1.300" stroke-linecap="round"/><path d="M414 447L421 468.9" stroke="#1c90f8" stroke-width="1.300" stroke-linecap="round"/><path d="M421 468.9L425 484" stroke="#18a0f0" stroke-width="1.300" stroke-linecap="round"/><path d="M425 484L429.4 499.9" stroke="#10b0e8" stroke-width="1.300" stroke-linecap="round"/><path d="M429.4 499.9L439.5 516.5" stroke="#08c0d8" stroke-width="1.300" stroke-linecap="round"/><path d="M439.5 516.5L455.7 527.6" stroke="#00c8b8" stroke-width="1.300" stroke-linecap="round"/><path d="M455.7 527.6L471.9 532.7" stroke="#00cc98" stroke-width="1.300" stroke-linecap="round"/><path d="M471.9 532.7L490.4 533.6" stroke="#00cc80" stroke-width="1.300" stroke-linecap="round"/><path d="M490.4 533.6L509 532.7" stroke="#00cc60" stroke-width="1.300" stroke-linecap="round"/><path d="M509 532.7L527.4 529" stroke="#10d040" stroke-width="1.300" stroke-linecap="round"/><path d="M527.4 529L543.6 522" stroke="#20d828" stroke-width="1.300" stroke-linecap="round"/><path d="M543.6 522L544.3 460" stroke="#38e010" stroke-width="1.300" stroke-linecap="round"/><path d="M544.3 460L545 394.8" stroke="#60e000" stroke-width="1.300" stroke-linecap="round"/><path d="M545 394.8L551.5 376.3" stroke="#90e400" stroke-width="1.300" stroke-linecap="round"/><path d="M551.5 376.3L564.5 360.1" stroke="#b8e800" stroke-width="1.300" stroke-linecap="round"/><path d="M564.5 360.1L600 360.1" stroke="#d8e800" stroke-width="1.300" stroke-linecap="round"/><path d="M600 360.1L633.9 360.3" stroke="#f0e400" stroke-width="1.300" stroke-linecap="round"/><path d="M633.9 360.3L680 361.5" stroke="#ffd800" stroke-width="1.300" stroke-linecap="round"/><path d="M680 361.5L712.5 363.8" stroke="#ffc000" stroke-width="1.300" stroke-linecap="round"/><path d="M712.5 363.8L749.5 369.4" stroke="#ff9c00" stroke-width="1.300" stroke-linecap="round"/><path d="M749.5 369.4L769 378.6" stroke="#ff7000" stroke-width="1.300" stroke-linecap="round"/><path d="M769 378.6L784.2 397.2" stroke="#ff4000" stroke-width="1.300" stroke-linecap="round"/><circle cx="371.500" cy="407.800" r="3.300" fill="#606060"/><path d="M793 426q-1 4 1 7" stroke="#e01010" stroke-width="1.200" fill="none"/><path d="M270 763V736" stroke="#20e0f0" stroke-width="3"/><path d="M270 729l4 9h-8z" fill="#40e8f8"/><circle cx="273.500" cy="760" r="2.500" fill="#20a020"/><path d="M269 763H297" stroke="#f01818" stroke-width="3"/><path d="M305 763l-9 4v-8z" fill="#ff3030"/><text x="269" y="725" font-family="Liberation Sans,sans-serif" font-size="12" fill="#20e0f0">Z</text><text x="318.500" y="774.500" font-family="Liberation Sans,sans-serif" font-size="12" fill="#f01818">X</text><text x="273.500" y="771.500" font-family="Liberation Sans,sans-serif" font-size="9" fill="#20d020">Y</text></svg>
<div style="left:844px;top:144px;width:4px;height:684px;background:#c5cad5"></div>
<div style="left:848px;top:145px;width:274px;height:19px;background:#e8ecf6"></div>
<span class="tx" style="left:852.0px;top:147.5px;font-size:12px;height:14px;line-height:14px;color:#2e3342;transform:scaleX(0.955);">Property</span>
<svg style="left:1093px;top:150px;" width="7" height="8" viewBox="0 0 7 8"><path d="M1.500 .5h4v4.500h-4zM4.500 .5v5M0 5.500h7M3.500 6v2" stroke="#666" stroke-width="1" fill="none"/><path d="M4 .5h1.500v5H4z" fill="#666"/></svg>
<svg style="left:1109px;top:150px;" width="8" height="7" viewBox="0 0 8 7"><path d="M.5 0l7 7M7.500 0l-7 7" stroke="#666" stroke-width="1.300"/></svg>
<div style="left:848px;top:164px;width:274px;height:574px;background:#fff;border:1px solid #c3c9d6;border-top-color:#a4a9b4;border-right:none"></div>
<div style="left:849px;top:165px;width:21px;height:496px;background:#e9edf7"></div>
<div style="left:849px;top:165px;width:272px;height:2px;background:#e9edf7"></div>
<div style="left:849px;top:166px;width:272px;height:20px;background:#e9edf7"></div>
<svg style="left:856px;top:170.5px;" width="9" height="9" viewBox="0 0 9 9"><rect x=".5" y=".5" width="8" height="8" rx="1" fill="#fff" stroke="#8e8e8e"/><path d="M2 4.500h5" stroke="#3c4a9c" stroke-width="1.200"/></svg>
<span class="tx" style="left:873.8px;top:168.0px;font-size:13px;height:15px;line-height:15px;color:#6e6e6e;font-weight:bold;transform:scaleX(1.079);">基本情報</span>
<div style="left:870px;top:204px;width:251px;height:1px;background:#e9edf7"></div>
<span class="tx" style="left:873.8px;top:187.5px;font-size:12px;height:14px;line-height:14px;color:#000;transform:scaleX(1.062);">名前</span>
<span class="tx" style="left:989.7px;top:187.5px;font-size:12px;height:14px;line-height:14px;color:#000;transform:scaleX(0.968);">Streamline1</span>
<div style="left:870px;top:223px;width:251px;height:1px;background:#e9edf7"></div>
<span class="tx" style="left:873.8px;top:206.5px;font-size:12px;height:14px;line-height:14px;color:#000;transform:scaleX(1.104);">表示</span>
<span class="tx" style="left:989.7px;top:206.5px;font-size:12px;height:14px;line-height:14px;color:#000;transform:scaleX(0.973);">True</span>
<div style="left:849px;top:223px;width:272px;height:20px;background:#e9edf7"></div>
<svg style="left:856px;top:227.5px;" width="9" height="9" viewBox="0 0 9 9"><rect x=".5" y=".5" width="8" height="8" rx="1" fill="#fff" stroke="#8e8e8e"/><path d="M2 4.500h5" stroke="#3c4a9c" stroke-width="1.200"/></svg>
<span class="tx" style="left:873.8px;top:225.0px;font-size:13px;height:15px;line-height:15px;color:#6e6e6e;font-weight:bold;transform:scaleX(1.088);">流線</span>
<div style="left:870px;top:261px;width:251px;height:1px;background:#e9edf7"></div>
<span class="tx" style="left:873.8px;top:244.5px;font-size:12px;height:14px;line-height:14px;color:#000;transform:scaleX(0.84);">インポート</span>
<span class="tx" style="left:989.7px;top:244.5px;font-size:12px;height:14px;line-height:14px;color:#000;transform:scaleX(0.927);">False</span>
<div style="left:870px;top:261px;width:251px;height:20px;background:#e9edf7"></div>
<svg style="left:876px;top:265.5px;" width="9" height="9" viewBox="0 0 9 9"><rect x=".5" y=".5" width="8" height="8" rx="1" fill="#fff" stroke="#8e8e8e"/><path d="M2 4.500h5" stroke="#3c4a9c" stroke-width="1.200"/></svg>
<span class="tx" style="left:892.5px;top:263.0px;font-size:13px;height:15px;line-height:15px;color:#6e6e6e;font-weight:bold;transform:scaleX(1.09);">流線開始位置</span>
<div style="left:870px;top:280px;width:18px;height:20px;background:#e9edf7"></div>
<div style="left:888px;top:299px;width:233px;height:1px;background:#e9edf7"></div>
<span class="tx" style="left:892.5px;top:282.5px;font-size:12px;height:14px;line-height:14px;color:#8a8a8a;transform:scaleX(0.881);">ドメイン番号</span>
<span class="tx" style="left:989.7px;top:282.5px;font-size:12px;height:14px;line-height:14px;color:#8a8a8a;transform:scaleX(1.019);">0</span>
<div style="left:870px;top:299px;width:18px;height:20px;background:#e9edf7"></div>
<div style="left:888px;top:318px;width:233px;height:1px;background:#e9edf7"></div>
<span class="tx" style="left:892.5px;top:301.5px;font-size:12px;height:14px;line-height:14px;color:#000;transform:scaleX(0.991);">セル番号 IX</span>
<span class="tx" style="left:989.7px;top:301.5px;font-size:12px;height:14px;line-height:14px;color:#000;transform:scaleX(0.869);">1</span>
<div style="left:870px;top:318px;width:18px;height:20px;background:#e9edf7"></div>
<div style="left:888px;top:337px;width:233px;height:1px;background:#e9edf7"></div>
<span class="tx" style="left:892.5px;top:320.5px;font-size:12px;height:14px;line-height:14px;color:#000;transform:scaleX(0.975);">セル番号 IY</span>
<span class="tx" style="left:989.7px;top:320.5px;font-size:12px;height:14px;line-height:14px;color:#000;transform:scaleX(1.019);">0</span>
<div style="left:870px;top:337px;width:18px;height:20px;background:#e9edf7"></div>
<div style="left:888px;top:356px;width:233px;height:1px;background:#e9edf7"></div>
<span class="tx" style="left:892.5px;top:339.5px;font-size:12px;height:14px;line-height:14px;color:#000;transform:scaleX(0.986);">セル番号 IZ</span>
<span class="tx" style="left:989.7px;top:339.5px;font-size:12px;height:14px;line-height:14px;color:#000;transform:scaleX(0.974);">10</span>
<div style="left:870px;top:375px;width:251px;height:1px;background:#e9edf7"></div>
<div style="left:870px;top:357px;width:115px;height:18px;background:#b1c5ea"></div>
<div style="left:1104px;top:357px;width:17px;height:17px;border:1px solid #9c9c9c;border-radius:2px;background:linear-gradient(#fdeebc,#fbd170 45%,#f8bb38 55%,#fde08c)"></div>
<span class="tx" style="left:873.8px;top:358.5px;font-size:12px;height:14px;line-height:14px;color:#000;transform:scaleX(1.088);">作成</span>
<div style="left:870px;top:394px;width:251px;height:1px;background:#e9edf7"></div>
<span class="tx" style="left:873.8px;top:377.5px;font-size:12px;height:14px;line-height:14px;color:#000;transform:scaleX(0.806);">スタイル</span>
<span class="tx" style="left:989.7px;top:377.5px;font-size:12px;height:14px;line-height:14px;color:#000;transform:scaleX(1.065);">line</span>
<div style="left:870px;top:413px;width:251px;height:1px;background:#e9edf7"></div>
<span class="tx" style="left:873.8px;top:396.5px;font-size:12px;height:14px;line-height:14px;color:#8a8a8a;transform:scaleX(1.047);">粒子数</span>
<span class="tx" style="left:989.7px;top:396.5px;font-size:12px;height:14px;line-height:14px;color:#8a8a8a;transform:scaleX(0.974);">10</span>
<div style="left:870px;top:432px;width:251px;height:1px;background:#e9edf7"></div>
<span class="tx" style="left:873.8px;top:415.5px;font-size:12px;height:14px;line-height:14px;color:#8a8a8a;transform:scaleX(0.907);">ライン表示</span>
<span class="tx" style="left:989.7px;top:415.5px;font-size:12px;height:14px;line-height:14px;color:#8a8a8a;transform:scaleX(0.973);">True</span>
<div style="left:870px;top:451px;width:251px;height:1px;background:#e9edf7"></div>
<span class="tx" style="left:873.8px;top:434.5px;font-size:12px;height:14px;line-height:14px;color:#000;transform:scaleX(1.098);">開始点表示</span>
<span class="tx" style="left:989.7px;top:434.5px;font-size:12px;height:14px;line-height:14px;color:#000;transform:scaleX(0.973);">True</span>
<div style="left:870px;top:470px;width:251px;height:1px;background:#e9edf7"></div>
<span class="tx" style="left:873.8px;top:453.5px;font-size:12px;height:14px;line-height:14px;color:#000;transform:scaleX(1.118);">設定&amp;編集</span>
<div style="left:849px;top:470px;width:272px;height:20px;background:#e9edf7"></div>
<svg style="left:856px;top:474.5px;" width="9" height="9" viewBox="0 0 9 9"><rect x=".5" y=".5" width="8" height="8" rx="1" fill="#fff" stroke="#8e8e8e"/><path d="M2 4.500h5" stroke="#3c4a9c" stroke-width="1.200"/></svg>
<span class="tx" style="left:873.8px;top:472.0px;font-size:13px;height:15px;line-height:15px;color:#6e6e6e;font-weight:bold;transform:scaleX(1.079);">不透明度</span>
<div style="left:870px;top:508px;width:251px;height:1px;background:#e9edf7"></div>
<span class="tx" style="left:873.8px;top:491.5px;font-size:12px;height:14px;line-height:14px;color:#000;transform:scaleX(1.104);">有効</span>
<span class="tx" style="left:989.7px;top:491.5px;font-size:12px;height:14px;line-height:14px;color:#000;transform:scaleX(0.927);">False</span>
<div style="left:870px;top:527px;width:251px;height:1px;background:#e9edf7"></div>
<span class="tx" style="left:873.8px;top:510.5px;font-size:12px;height:14px;line-height:14px;color:#8a8a8a;transform:scaleX(1.085);">不透明度</span>
<span class="tx" style="left:989.7px;top:510.5px;font-size:12px;height:14px;line-height:14px;color:#8a8a8a;transform:scaleX(0.974);">50</span>
<div style="left:849px;top:527px;width:272px;height:20px;background:#e9edf7"></div>
<svg style="left:856px;top:531.5px;" width="9" height="9" viewBox="0 0 9 9"><rect x=".5" y=".5" width="8" height="8" rx="1" fill="#fff" stroke="#8e8e8e"/><path d="M2 4.500h5" stroke="#3c4a9c" stroke-width="1.200"/></svg>
<span class="tx" style="left:873.8px;top:529.0px;font-size:13px;height:15px;line-height:15px;color:#6e6e6e;transform:scaleX(0.84);font-weight:500;">アニメーション</span>
<div style="left:870px;top:565px;width:251px;height:1px;background:#e9edf7"></div>
<span class="tx" style="left:873.8px;top:548.5px;font-size:12px;height:14px;line-height:14px;color:#000;transform:scaleX(1.079);">再生</span>
<div style="left:870px;top:584px;width:251px;height:1px;background:#e9edf7"></div>
<span class="tx" style="left:873.8px;top:567.5px;font-size:12px;height:14px;line-height:14px;color:#000;transform:scaleX(1.079);">停止</span>
<div style="left:870px;top:603px;width:251px;height:1px;background:#e9edf7"></div>
<span class="tx" style="left:873.8px;top:586.5px;font-size:12px;height:14px;line-height:14px;color:#000;transform:scaleX(0.907);">フレーム数</span>
<span class="tx" style="left:989.7px;top:586.5px;font-size:12px;height:14px;line-height:14px;color:#000;transform:scaleX(0.944);">100</span>
<div style="left:870px;top:622px;width:251px;height:1px;background:#e9edf7"></div>
<span class="tx" style="left:873.8px;top:605.5px;font-size:12px;height:14px;line-height:14px;color:#8a8a8a;transform:scaleX(0.825);">リピート</span>
<span class="tx" style="left:989.7px;top:605.5px;font-size:12px;height:14px;line-height:14px;color:#8a8a8a;transform:scaleX(0.927);">False</span>
<div style="left:870px;top:641px;width:251px;height:1px;background:#e9edf7"></div>
<span class="tx" style="left:873.8px;top:624.5px;font-size:12px;height:14px;line-height:14px;color:#000;transform:scaleX(1.089);">更新間隔時間</span>
<span class="tx" style="left:989.7px;top:624.5px;font-size:12px;height:14px;line-height:14px;color:#000;transform:scaleX(0.915);">0.200000</span>
<div style="left:870px;top:660px;width:251px;height:1px;background:#e9edf7"></div>
<span class="tx" style="left:873.8px;top:643.5px;font-size:12px;height:14px;line-height:14px;color:#000;transform:scaleX(1.104);">保存</span>
<span class="tx" style="left:989.7px;top:643.5px;font-size:12px;height:14px;line-height:14px;color:#000;transform:scaleX(0.927);">False</span>
<div style="left:985px;top:185px;width:1px;height:552px;background:#e9edf7"></div>
<div style="left:866px;top:258px;width:256.500px;height:145px;border:5px solid #ff00ff"></div>
<div style="left:866px;top:524px;width:256.500px;height:44px;border:5px solid #ff00ff"></div>
<div style="left:849px;top:738px;width:273px;height:66px;background:#e9edf7"></div>
<div style="left:852px;top:742px;width:268px;height:60px;background:#e9edf7;border:1px solid #a2a6ae"></div>
<span class="tx" style="left:856.0px;top:745.0px;font-size:13px;height:15px;line-height:15px;color:#000;font-weight:bold;transform:scaleX(1.073);">作成</span>
<span class="tx" style="left:856.0px;top:763.5px;font-size:12px;height:14px;line-height:14px;color:#000;transform:scaleX(0.948);">流線開始位置を始点として流線を作成します。</span>
<div style="left:848px;top:804px;width:274px;height:1px;background:#9aa0ac"></div>
<div style="left:852.500px;top:804px;width:68px;height:20px;background:linear-gradient(#eaf0f6,#f4f7fb);border:1px solid #9fd0d8;border-top:none;border-radius:0 0 4px 4px"></div>
<svg style="left:855px;top:806px;" width="18" height="16" viewBox="0 0 18 16"><rect x="1.500" y="5.500" width="11" height="9" fill="#f4f6fc" stroke="#4a56a0"/><path d="M3.500 9h2M7 9h4M3.500 12h2M7 12h4" stroke="#7a86c0" stroke-width="1"/><path d="M3 5l5-4 4 3.500 4-2-3 3.500-3-2z" fill="#f0b030" stroke="#a07818" stroke-width=".6"/><circle cx="15.500" cy="2.500" r="1.800" fill="#40b040"/></svg>
<span class="tx" style="left:872.1px;top:808.5px;font-size:12px;height:14px;line-height:14px;color:#3a4150;transform:scaleX(0.957);">Property</span>
<span class="tx" style="left:929.5px;top:808.5px;font-size:12px;height:14px;line-height:14px;color:#3a4150;transform:scaleX(0.962);">Probe</span>
<div style="left:1px;top:828px;width:1122px;height:24px;background:linear-gradient(#e4e7ed 0,#d3d7df 3px,#c6cad4 11px,#b4bac6 12px,#a9afbc 23px);border-top:1px solid #aeb3be"></div>
<span class="tx" style="left:9.6px;top:833.5px;font-size:11px;height:13px;line-height:13px;color:#1c1f27;transform:scaleX(1.038);">center:</span>
<span class="tx" style="left:50.7px;top:833.5px;font-size:11px;height:13px;line-height:13px;color:#1c1f27;transform:scaleX(0.976);">1.00000E+000,</span>
<span class="tx" style="left:130.8px;top:833.5px;font-size:11px;height:13px;line-height:13px;color:#1c1f27;transform:scaleX(0.96);">5.00000E-001,</span>
<span class="tx" style="left:207.1px;top:833.5px;font-size:11px;height:13px;line-height:13px;color:#1c1f27;transform:scaleX(0.958);">5.00000E-001</span>
<span class="tx" style="left:304.2px;top:833.5px;font-size:11px;height:13px;line-height:13px;color:#1c1f27;transform:scaleX(1.035);">min:</span>
<span class="tx" style="left:332.2px;top:833.5px;font-size:11px;height:13px;line-height:13px;color:#1c1f27;transform:scaleX(0.976);">0.00000E+000,</span>
<span class="tx" style="left:411.7px;top:833.5px;font-size:11px;height:13px;line-height:13px;color:#1c1f27;transform:scaleX(0.982);">0.00000E+000,</span>
<span class="tx" style="left:491.8px;top:833.5px;font-size:11px;height:13px;line-height:13px;color:#1c1f27;transform:scaleX(0.993);">0.00000E+000</span>
<span class="tx" style="left:584.5px;top:833.5px;font-size:11px;height:13px;line-height:13px;color:#1c1f27;transform:scaleX(0.986);">max:</span>
<span class="tx" style="left:613.0px;top:833.5px;font-size:11px;height:13px;line-height:13px;color:#1c1f27;transform:scaleX(0.994);">2.00000E+000,</span>
<span class="tx" style="left:694.0px;top:833.5px;font-size:11px;height:13px;line-height:13px;color:#1c1f27;transform:scaleX(0.981);">1.00000E+000,</span>
<span class="tx" style="left:774.0px;top:833.5px;font-size:11px;height:13px;line-height:13px;color:#1c1f27;transform:scaleX(1.002);">1.00000E+000</span>
<div style="left:293px;top:831px;width:1px;height:20px;background:#8e94a0"></div><div style="left:294px;top:831px;width:1px;height:20px;background:#e2e5ea"></div>
<div style="left:574px;top:831px;width:1px;height:20px;background:#8e94a0"></div><div style="left:575px;top:831px;width:1px;height:20px;background:#e2e5ea"></div>
<div style="left:1079px;top:831px;width:1px;height:20px;background:#8e94a0"></div><div style="left:1080px;top:831px;width:1px;height:20px;background:#e2e5ea"></div>
<svg style="left:1108px;top:838px;" width="12" height="12" viewBox="0 0 12 12"><rect x="8" y="0" width="2" height="2" fill="#7c8290"/><rect x="4" y="4" width="2" height="2" fill="#7c8290"/><rect x="8" y="4" width="2" height="2" fill="#7c8290"/><rect x="0" y="8" width="2" height="2" fill="#7c8290"/><rect x="4" y="8" width="2" height="2" fill="#7c8290"/><rect x="8" y="8" width="2" height="2" fill="#7c8290"/></svg>
<div id="frame"></div>
</body></html>
